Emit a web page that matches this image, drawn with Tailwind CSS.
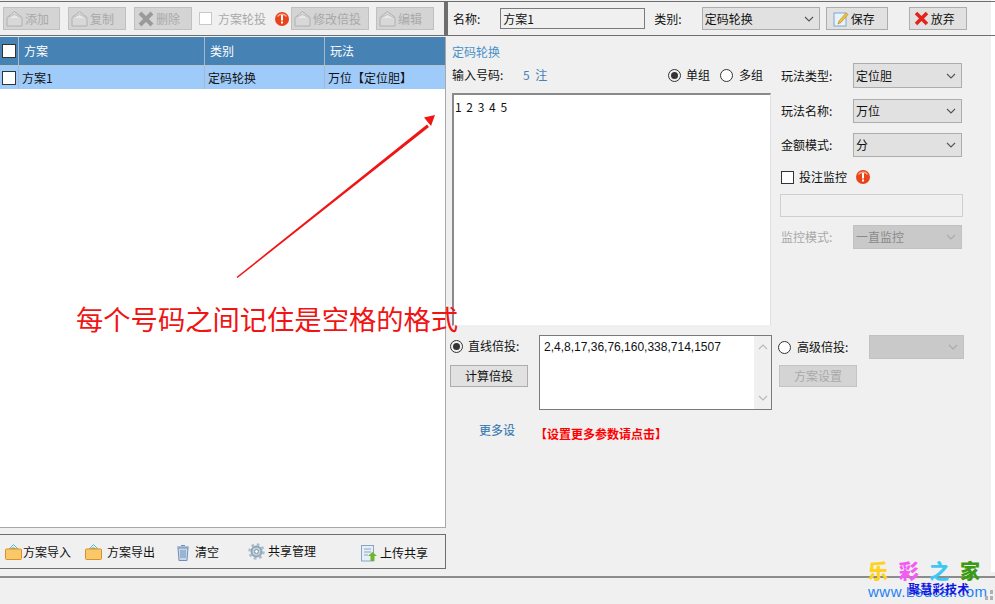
<!DOCTYPE html>
<html lang="zh">
<head>
    <meta charset="UTF-8">
    <title>方案设置</title>
    <script src="https://cdn.jsdelivr.net/npm/@tailwindcss/browser@4"></script>
</head>
<body class="bg-[#f0f0f0]">
    <svg class="hidden">
        <symbol id="house" viewBox="0 0 17 17">
            <path d="M1 7.500 8.500 1.500 16 7.500V16H1z" fill="#d8d8d8" stroke="#b0b0b0"/>
            <path d="M1.500 8 8.500 4.500 15.500 8" fill="#e8e8e8" stroke="#c0c0c0"/>
        </symbol>
        <symbol id="alert" viewBox="0 0 14 14">
            <circle cx="7" cy="7" r="7" fill="#e8431a"/>
            <path d="M2.500 4.500A5.500 5 0 0 1 11.500 4.500" fill="none" stroke="#f9a68c" stroke-width="1.500"/>
            <rect x="6" y="3" width="2" height="5.500" fill="#fff"/>
            <rect x="6" y="9.500" width="2" height="2" fill="#fff"/>
        </symbol>
        <symbol id="chev" viewBox="0 0 10 6">
            <path d="M1 1l4 4 4-4" fill="none" stroke="currentColor" stroke-width="1.100"/>
        </symbol>
        <symbol id="folder" viewBox="0 0 17 17">
            <path d="M4 6 8.500 1.500 13 6z" fill="#dff0f4" stroke="#6fb3c4" stroke-width="1"/>
            <path d="M6 6l2-2 3 2z" fill="#7fb56f"/>
            <rect x="0.500" y="6" width="16" height="10.500" rx="1" fill="#fbc869" stroke="#d9902a"/>
        </symbol>
    </svg>

    <div class="relative w-[995px] h-[604px] overflow-hidden bg-[#f0f0f0] text-[12px] leading-[16px] text-[#111] font-['Noto_Sans_CJK_SC','Liberation_Sans',sans-serif]">
        <div class="flex h-[572px]">
            <!-- left -->
            <div class="w-[446px] shrink-0 flex flex-col pt-px">
                <div class="h-[35px] border-y border-r-2 border-[#6e6e6e] flex items-center text-[#a9a9a9] shrink-0">
                    <button class="ml-[3px] w-[57px] h-[23px] bg-[#d4d4d4] border border-[#c0c0c0] flex items-center pl-[2px] gap-[2px]"><svg class="w-[17px] h-[17px]"><use href="#house"/></svg>添加</button>
                    <button class="ml-[8px] w-[58px] h-[23px] bg-[#d4d4d4] border border-[#c0c0c0] flex items-center pl-[2px] gap-[2px]"><svg class="w-[17px] h-[17px]"><use href="#house"/></svg>复制</button>
                    <button class="ml-[8px] w-[58px] h-[23px] bg-[#d4d4d4] border border-[#c0c0c0] flex items-center pl-[2px] gap-[1px]">
                        <svg class="w-[18px] h-[18px]" viewBox="0 0 18 18"><path d="M3 3l12 12M15 3 3 15" stroke="#9a9a9a" stroke-width="4"/></svg>删除</button>
                    <span class="ml-[7px] w-[13px] h-[13px] bg-white border border-[#c8c8c8]"></span>
                    <span class="ml-[6px]">方案轮投</span>
                    <svg class="ml-[9px] w-[14px] h-[14px]"><use href="#alert"/></svg>
                    <button class="ml-[2px] w-[78px] h-[23px] bg-[#d4d4d4] border border-[#c0c0c0] flex items-center pl-[2px] gap-[2px]"><svg class="w-[17px] h-[17px]"><use href="#house"/></svg>修改倍投</button>
                    <button class="ml-[7px] w-[58px] h-[23px] bg-[#d4d4d4] border border-[#c0c0c0] flex items-center pl-[2px] gap-[2px]"><svg class="w-[17px] h-[17px]"><use href="#house"/></svg>编辑</button>
                </div>
                <!-- table -->
                <div class="mt-[1px] h-[491px] bg-white border-b border-r border-[#a8a8a8] shrink-0">
                    <div class="h-[29px] bg-[#4682b4] text-white grid grid-cols-[19px_186px_120px_1fr] border-b border-[#b8c4cc]">
                        <div class="border-r border-[#a8b8c8] flex items-center pl-[2px]"><span class="w-[14px] h-[14px] bg-white border border-[#333]"></span></div>
                        <div class="border-r border-[#a8b8c8] flex items-center pl-[5px]">方案</div>
                        <div class="border-r border-[#a8b8c8] flex items-center pl-[5px]">类别</div>
                        <div class="flex items-center pl-[5px]">玩法</div>
                    </div>
                    <div class="h-[23px] bg-[#9fcbfa] grid grid-cols-[19px_186px_120px_1fr]">
                        <div class="border-r border-[#a8b8c8] flex items-center pl-[2px]"><span class="w-[14px] h-[14px] bg-white border border-[#333]"></span></div>
                        <div class="border-r border-[#a8b8c8] flex items-center pl-[3px]">方案1</div>
                        <div class="border-r border-[#a8b8c8] flex items-center pl-[3px]">定码轮换</div>
                        <div class="flex items-center pl-[3px]">万位【定位胆】</div>
                    </div>
                </div>
                <!-- bottom actions -->
                <div class="mt-[6px] h-[35px] border-y border-r border-[#6e6e6e] flex items-center shrink-0">
                    <svg class="ml-[5px] w-[17px] h-[17px]"><use href="#folder"/></svg>
                    <span class="ml-px">方案导入</span>
                    <svg class="ml-[14px] w-[17px] h-[17px]"><use href="#folder"/></svg>
                    <span class="ml-[5px]">方案导出</span>
                    <svg class="ml-[21px] mt-[2px] w-[14px] h-[17px]" viewBox="0 0 14 17">
                        <path d="M2 4h10l-1 12.500H3z" fill="#c8d8ec" stroke="#6f8fb8"/>
                        <path d="M1 3h12M5 1.500h4M5 6v8M7 6v8M9 6v8" fill="none" stroke="#6f8fb8"/>
                    </svg>
                    <span class="ml-[5px]">清空</span>
                    <svg class="ml-[29px] w-[17px] h-[17px]" viewBox="0 0 17 17">
                        <circle cx="8.500" cy="8.500" r="5" fill="#c4d2dc" stroke="#8fa6b8" stroke-width="2"/>
                        <circle cx="8.500" cy="8.500" r="7" fill="none" stroke="#a8bccb" stroke-width="2.500" stroke-dasharray="2.700 2.800"/>
                        <circle cx="8.500" cy="8.500" r="2" fill="#f0f4f7" stroke="#7f96a8"/>
                    </svg>
                    <span class="ml-[3px] -mt-[2px]">共享管理</span>
                    <svg class="ml-[45px] mt-[4px] w-[16px] h-[17px]" viewBox="0 0 16 17">
                        <rect x="0.500" y="0.500" width="12" height="15.500" fill="#e6eef8" stroke="#8aa4c8"/>
                        <path d="M3 4h7M3 7h7M3 10h4" stroke="#8aa4c8"/>
                        <path d="M11.500 7 16 11h-2.500v5h-4v-5H7z" fill="#6db52d"/>
                    </svg>
                    <span class="ml-[3px] mt-[2px]">上传共享</span>
                </div>
            </div>
            <!-- right -->
            <div class="flex-1 flex flex-col pt-px border-r-[4px] border-white">
                <div class="h-[35px] border-y border-l-2 border-[#6e6e6e] flex items-center shrink-0 -mr-[4px]">
                    <span class="ml-[5px]">名称:</span>
                    <span class="ml-[20px] w-[145px] h-[21px] bg-[#f0f0f0] border border-[#7a7a7a] flex items-center pl-[2px]">方案1</span>
                    <span class="ml-[9px]">类别:</span>
                    <div class="ml-[20px] w-[118px] h-[23px] bg-[#e1e1e1] border border-[#adadad] flex items-center justify-between pl-[2px] pr-[5px]">定码轮换<svg class="w-[10px] h-[6px] text-[#555]"><use href="#chev"/></svg></div>
                    <button class="ml-[6px] w-[62px] h-[23px] bg-[#e1e1e1] border border-[#adadad] flex items-center pl-[6px] gap-[2px]">
                        <svg class="w-[16px] h-[16px]" viewBox="0 0 16 16"><rect x="1" y="2" width="12" height="13" fill="#e8f2fb" stroke="#7fa8d0"/><path d="M6 10 13 2l2 1.500L8 11.500 5 13z" fill="#f3c23c" stroke="#c08a20" stroke-width=".7"/></svg>保存</button>
                    <button class="ml-[21px] w-[58px] h-[23px] bg-[#e1e1e1] border border-[#adadad] flex items-center pl-[3px] gap-[1px]">
                        <svg class="w-[17px] h-[17px]" viewBox="0 0 17 17"><path d="M3 3l11 11M14 3 3 14" stroke="#e3241b" stroke-width="3.500"/></svg>放弃</button>
                </div>
                <div class="flex ml-[6px] shrink-0">
                    <!-- code entry -->
                    <div class="w-[319px] shrink-0">
                        <div class="mt-[8px] text-[#4a90c8]">定码轮换</div>
                        <div class="mt-[7px] flex items-center h-[16px]">
                            <span class="w-[71px]">输入号码:</span>
                            <span class="w-[23px] whitespace-nowrap text-[#4682b4] tracking-[1.500px]">5 注</span>
                            <span class="ml-[122px] w-[13px] h-[13px] rounded-full border border-[#333] flex items-center justify-center"><span class="w-[7px] h-[7px] rounded-full bg-[#333]"></span></span>
                            <span class="ml-[5px]">单组</span>
                            <span class="ml-[10px] w-[13px] h-[13px] rounded-full border border-[#333] bg-white"></span>
                            <span class="ml-[6px]">多组</span>
                        </div>
                        <div class="mt-[10px] h-[233px] w-[319px] bg-white border-t-2 border-l-2 border-[#8a8a8a] pl-[1px] pt-[4px] border-b border-r border-b-[#f0f0f0] border-r-[#e0e0e0] tracking-[1px]">1 2 3 4 5</div>
                    </div>
                    <!-- play options -->
                    <div class="ml-[10px] w-[181px] shrink-0 pt-[27px]">
                        <div class="flex items-center justify-between h-[25px]"><span>玩法类型:</span>
                            <div class="w-[109px] h-[25px] bg-[#e1e1e1] border border-[#adadad] flex items-center justify-between pl-[2px] pr-[5px]">定位胆<svg class="w-[10px] h-[6px] text-[#555]"><use href="#chev"/></svg></div>
                        </div>
                        <div class="mt-[11px] flex items-center justify-between h-[24px]"><span>玩法名称:</span>
                            <div class="w-[109px] h-[24px] bg-[#e1e1e1] border border-[#adadad] flex items-center justify-between pl-[2px] pr-[5px]">万位<svg class="w-[10px] h-[6px] text-[#555]"><use href="#chev"/></svg></div>
                        </div>
                        <div class="mt-[10px] flex items-center justify-between h-[24px]"><span>金额模式:</span>
                            <div class="w-[109px] h-[24px] bg-[#e1e1e1] border border-[#adadad] flex items-center justify-between pl-[2px] pr-[5px]">分<svg class="w-[10px] h-[6px] text-[#555]"><use href="#chev"/></svg></div>
                        </div>
                        <div class="mt-[12px] flex items-center h-[16px]">
                            <span class="w-[13px] h-[13px] bg-white border border-[#333]"></span>
                            <span class="ml-[5px]">投注监控</span>
                            <svg class="ml-[9px] w-[14px] h-[14px]"><use href="#alert"/></svg>
                        </div>
                        <div class="mt-[9px] -ml-px w-[183px] h-[23px] bg-[#f0f0f0] border border-[#cfcfcf]"></div>
                        <div class="mt-[8px] flex items-center justify-between h-[24px] text-[#a9a9a9]"><span>监控模式:</span>
                            <div class="w-[109px] h-[24px] bg-[#c9c9c9] border border-[#c2c2c2] flex items-center justify-between pl-[2px] pr-[5px] text-[#8a8a8a]">一直监控<svg class="w-[10px] h-[6px] text-[#aaa]"><use href="#chev"/></svg></div>
                        </div>
                    </div>
                </div>
                <!-- multiplier -->
                <div class="flex ml-[4px] mt-[9px] shrink-0">
                    <div class="w-[78px] shrink-0">
                        <div class="flex items-center h-[22px]">
                            <span class="w-[13px] h-[13px] rounded-full border border-[#333] flex items-center justify-center"><span class="w-[7px] h-[7px] rounded-full bg-[#333]"></span></span>
                            <span class="ml-[5px]">直线倍投:</span>
                        </div>
                        <button class="mt-[8px] w-[78px] h-[22px] bg-[#e1e1e1] border border-[#adadad]">计算倍投</button>
                    </div>
                    <div class="ml-[11px] w-[233px] h-[75px] bg-white border border-[#7a7a7a] flex shrink-0">
                        <div class="flex-1 pl-[4px] pt-[3px] font-['Liberation_Sans',sans-serif]">2,4,8,17,36,76,160,338,714,1507</div>
                        <div class="w-[17px] bg-[#f0f0f0] flex flex-col justify-between items-center py-[8px] text-[#b8b8b8]">
                            <svg class="w-[10px] h-[6px] rotate-180"><use href="#chev"/></svg>
                            <svg class="w-[10px] h-[6px]"><use href="#chev"/></svg>
                        </div>
                    </div>
                    <div class="ml-[6px] w-[187px] shrink-0">
                        <div class="flex items-center h-[24px]">
                            <span class="w-[13px] h-[13px] rounded-full border border-[#333] bg-white"></span>
                            <span class="ml-[6px]">高级倍投:</span>
                            <div class="ml-[21px] w-[95px] h-[24px] bg-[#c9c9c9] border border-[#c2c2c2] flex items-center justify-end pr-[5px]"><svg class="w-[10px] h-[6px] text-[#aaa]"><use href="#chev"/></svg></div>
                        </div>
                        <button class="mt-[6px] ml-px w-[78px] h-[22px] bg-[#d4d4d4] border border-[#c4c4c4] text-[#a9a9a9]">方案设置</button>
                    </div>
                </div>
                <div class="flex ml-[33px] mt-[12px] shrink-0">
                    <span class="text-[#4682b4] font-medium">更多设</span>
                    <span class="ml-[20px] mt-[4px] text-[#ff0000] font-bold">【设置更多参数请点击】</span>
                </div>
            </div>
        </div>
        <div class="mt-[4px] h-[28px] border-t-2 border-[#8c8c8c] bg-[#f0f0f0]"></div>

        <!-- annotation drawn over the window -->
        <svg class="absolute left-[230px] top-[110px] w-[210px] h-[172px]" viewBox="0 0 210 172">
            <path d="M6.500 167 197 14.500 199 17 7.500 168z" fill="#f01414"/>
            <path d="M205 5 194 7.500 201 16z" fill="#f01414"/>
        </svg>
        <div class="absolute left-[76px] top-[299px] whitespace-nowrap text-[27.300px] leading-[38px] text-[#f01414]">每个号码之间记住是空格的格式</div>

        <!-- watermark -->
        <div class="absolute left-[868px] top-[559px] w-[112px] flex justify-between text-[20px] leading-[24px] font-black">
            <span class="text-[#ffd21e]">乐</span><span class="text-[#f25cf0]">彩</span><span class="text-[#3cc8f5]">之</span><span class="text-[#3a9a12]">家</span>
        </div>
        <div class="absolute left-[868px] top-[584px] whitespace-nowrap text-[15px] leading-[16px] tracking-[0.500px] text-[#1e82f5] font-['Liberation_Sans',sans-serif]">www.Ledcai.com</div>
        <div class="absolute left-[908px] top-[581px] whitespace-nowrap text-[12px] leading-[16px] tracking-[0.300px] font-semibold text-[#1414e0]">聚慧彩技术</div>
        <div class="absolute left-[985px] top-[590px] w-[8px] h-[10px] grid grid-cols-2 gap-[2px]">
            <span class="col-start-2 bg-[#b0b0b0]"></span><span class="bg-[#b0b0b0]"></span><span class="bg-[#b0b0b0]"></span>
        </div>
    </div>
</body>
</html>
